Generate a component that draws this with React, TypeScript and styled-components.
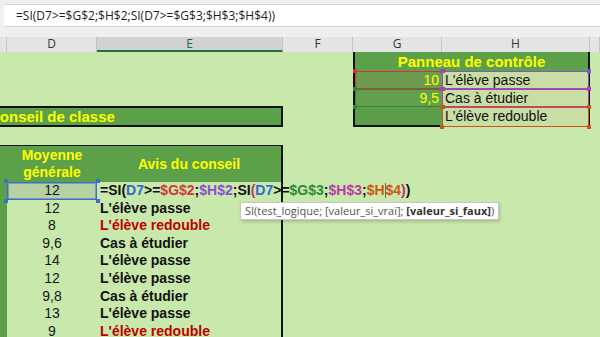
import React from 'react';
import styled, { createGlobalStyle } from 'styled-components';

const GREEN = '#5ca04a';
const LIGHT = '#c9e8ab';
const YELLOW = '#ffff00';

const GlobalStyle = createGlobalStyle`
  html, body { margin: 0; padding: 0; }
  body {
    width: 600px; height: 337px; overflow: hidden;
    background: ${LIGHT};
    font-family: "Liberation Sans", Arial, sans-serif;
  }
`;

const Page = styled.div`
  width: 600px;
  height: 337px;
  overflow: hidden;
  display: flex;
  flex-direction: column;
  background: ${LIGHT};
`;

const FormulaBar = styled.div`
  flex: none;
  height: 37px;
  box-sizing: border-box;
  padding: 4px 0 0 4px;
  background: #efefef;
`;

const FormulaInput = styled.div`
  height: 23px;
  box-sizing: border-box;
  background: #ffffff;
  border-top: 1px solid #d4d4d4;
  border-bottom: 1px solid #d4d4d4;
  padding-left: 12px;
  font-family: "Open Sans", "Noto Sans", sans-serif;
  font-size: 12px;
  line-height: 21px;
  color: #1e1e1e;
  white-space: nowrap;
`;

const HeaderRow = styled.div`
  flex: none;
  height: 15px;
  display: flex;
  background: #e4e4e4;
`;

const ColHead = styled.div<{ $w: number; $active?: boolean }>`
  flex: none;
  width: ${p => p.$w}px;
  box-sizing: border-box;
  border-right: 1px solid #c4c4c4;
  border-bottom: ${p => (p.$active ? '2px solid #217346' : 'none')};
  background: ${p => (p.$active ? '#d2d2d2' : 'transparent')};
  color: ${p => (p.$active ? '#1d6b40' : '#333333')};
  font-family: "Open Sans", "Noto Sans", sans-serif;
  font-size: 12px;
  line-height: 14px;
  text-align: center;
`;

const Sheet = styled.div`
  flex: 1;
  display: flex;
  min-height: 0;
`;

const LeftBlock = styled.div`
  flex: none;
  width: 283px;
  display: flex;
  flex-direction: column;
`;

const Spacer = styled.div<{ $h?: number; $w?: number }>`
  flex: none;
  height: ${p => (p.$h != null ? `${p.$h}px` : 'auto')};
  width: ${p => (p.$w != null ? `${p.$w}px` : 'auto')};
`;

const TitleBand = styled.div`
  flex: none;
  height: 21px;
  box-sizing: border-box;
  background: ${GREEN};
  border: 2px solid #121212;
  border-left: none;
  display: flex;
  align-items: center;
  overflow: hidden;
`;

const TitleText = styled.span`
  margin-left: -11px;
  color: ${YELLOW};
  font-weight: bold;
  font-size: 15px;
  white-space: nowrap;
`;

const TableHead = styled.div`
  flex: none;
  height: 37px;
  box-sizing: border-box;
  display: flex;
  background: ${GREEN};
  border-top: 1px solid #1a1a1a;
  border-right: 2px solid #121212;
`;

const HeadCell = styled.div<{ $w: number }>`
  flex: none;
  width: ${p => p.$w}px;
  display: flex;
  align-items: center;
  justify-content: center;
  text-align: center;
  color: ${YELLOW};
  font-weight: bold;
  font-size: 14px;
  line-height: 17px;
`;

const DataBlock = styled.div`
  flex: none;
  display: flex;
  flex-direction: column;
  border-right: 2px solid #121212;
`;

const DataRow = styled.div`
  flex: none;
  height: 17.6px;
  display: flex;
`;

const CStrip = styled.div`
  flex: none;
  width: 7px;
  background: ${GREEN};
`;

const NumCell = styled.div<{ $sel?: boolean }>`
  flex: none;
  position: relative;
  width: 90px;
  box-sizing: border-box;
  background: ${p => (p.$sel ? '#b6d2a3' : 'transparent')};
  box-shadow: ${p => (p.$sel ? 'inset 0 0 0 1.5px #3b6fc8' : 'none')};
  text-align: center;
  font-size: 14px;
  line-height: 17.6px;
  color: #151515;
`;

const TextCell = styled.div<{ $red?: boolean }>`
  flex: none;
  position: relative;
  width: 184px;
  padding-left: 3px;
  box-sizing: border-box;
  white-space: nowrap;
  font-weight: bold;
  font-size: 14px;
  line-height: 17.6px;
  color: ${p => (p.$red ? '#c00000' : '#111111')};
  z-index: 2;
`;

const Tok = styled.span<{ $c?: string }>`
  color: ${p => p.$c || '#111111'};
`;

const Caret = styled.span`
  display: inline-block;
  width: 1px;
  height: 15px;
  background: #6a6a6a;
  vertical-align: -3px;
`;

const Tooltip = styled.div`
  position: absolute;
  left: 143px;
  top: 20px;
  height: 18px;
  box-sizing: border-box;
  padding: 0 4px;
  background: #ffffff;
  border: 1px solid #c6c6c6;
  box-shadow: 1px 2px 3px rgba(0, 0, 0, 0.18);
  font-family: "Open Sans", "Noto Sans", sans-serif;
  font-weight: normal;
  font-size: 11px;
  line-height: 16px;
  color: #555555;
  white-space: nowrap;
  z-index: 5;
`;

const TipBold = styled.span`
  font-weight: bold;
  color: #333333;
`;

const Panel = styled.div`
  flex: none;
  width: 237px;
  display: flex;
  flex-direction: column;
  align-self: flex-start;
`;

const PanelTitle = styled.div`
  flex: none;
  height: 19px;
  box-sizing: border-box;
  background: ${GREEN};
  border-left: 2px solid #121212;
  border-right: 2px solid #121212;
  color: ${YELLOW};
  font-weight: bold;
  font-size: 15px;
  line-height: 19px;
  text-align: center;
`;

const PanelRow = styled.div<{ $last?: boolean }>`
  flex: none;
  display: flex;
  height: ${p => (p.$last ? 20 : 18)}px;
`;

const GCell = styled.div<{ $bg: string; $last?: boolean }>`
  flex: none;
  position: relative;
  width: 89px;
  box-sizing: border-box;
  background: ${p => p.$bg};
  border-left: 2px solid #121212;
  border-bottom: ${p => (p.$last ? '2px solid #121212' : 'none')};
  padding-right: 3px;
  text-align: right;
  color: ${YELLOW};
  font-size: 14px;
  line-height: 18px;
`;

const HCell = styled.div`
  flex: none;
  position: relative;
  width: 148px;
  box-sizing: border-box;
  background: #c9dea5;
  border-right: 2px solid #121212;
  padding-left: 3px;
  color: #111111;
  font-size: 14px;
  line-height: 18px;
  white-space: nowrap;
`;

const RangeBox = styled.div<{ $c: string }>`
  position: absolute;
  inset: 0 -1px 0 0;
  border: 1.5px solid ${p => p.$c};
  pointer-events: none;
`;

const Handle = styled.span<{ $c: string; $x: 'l' | 'r'; $y: 't' | 'b' }>`
  position: absolute;
  width: 4px;
  height: 4px;
  background: ${p => p.$c};
  ${p => (p.$x === 'l' ? 'left: -3px;' : 'right: -3px;')}
  ${p => (p.$y === 't' ? 'top: -3px;' : 'bottom: -3px;')}
  z-index: 3;
`;

const Handles: React.FC<{ c: string }> = ({ c }) => (
  <>
    <Handle $c={c} $x="l" $y="t" />
    <Handle $c={c} $x="r" $y="t" />
    <Handle $c={c} $x="l" $y="b" />
    <Handle $c={c} $x="r" $y="b" />
  </>
);

const Range: React.FC<{ c: string }> = ({ c }) => (
  <RangeBox $c={c}>
    <Handles c={c} />
  </RangeBox>
);

const C = {
  blue: '#2f6ccc',
  red: '#d3343a',
  purple: '#8b52c8',
  paren: '#c0307a',
  green: '#2a8a3a',
  magenta: '#b83ca8',
  orange: '#cc5616',
};

const FORMULA = '=SI(D7>=$G$2;$H$2;SI(D7>=$G$3;$H$3;$H$4))';

const EditFormula = () => (
  <>
    <Tok>=SI(</Tok>
    <Tok $c={C.blue}>D7</Tok>
    <Tok>&gt;=</Tok>
    <Tok $c={C.red}>$G$2</Tok>
    <Tok>;</Tok>
    <Tok $c={C.purple}>$H$2</Tok>
    <Tok>;SI</Tok>
    <Tok $c={C.paren}>(</Tok>
    <Tok $c={C.blue}>D7</Tok>
    <Tok>&gt;=</Tok>
    <Tok $c={C.green}>$G$3</Tok>
    <Tok>;</Tok>
    <Tok $c={C.magenta}>$H$3</Tok>
    <Tok>;</Tok>
    <Tok $c={C.orange}>$H</Tok>
    <Caret />
    <Tok $c={C.orange}>$4</Tok>
    <Tok $c={C.paren}>)</Tok>
    <Tok>)</Tok>
  </>
);

type Row = { n: string; t?: string; red?: boolean; edit?: boolean };

const ROWS: Row[] = [
  { n: '12', edit: true },
  { n: '12', t: "L'élève passe" },
  { n: '8', t: "L'élève redouble", red: true },
  { n: '9,6', t: 'Cas à étudier' },
  { n: '14', t: "L'élève passe" },
  { n: '12', t: "L'élève passe" },
  { n: '9,8', t: 'Cas à étudier' },
  { n: '13', t: "L'élève passe" },
  { n: '9', t: "L'élève redouble", red: true },
];

const COLS: { w: number; l: string; active?: boolean }[] = [
  { w: 7, l: '' },
  { w: 90, l: 'D' },
  { w: 186, l: 'E', active: true },
  { w: 70, l: 'F' },
  { w: 89, l: 'G' },
  { w: 148, l: 'H' },
  { w: 10, l: '' },
];

export default function App() {
  return (
    <Page>
      <GlobalStyle />
      <FormulaBar>
        <FormulaInput>{FORMULA}</FormulaInput>
      </FormulaBar>
      <HeaderRow>
        {COLS.map((c, i) => (
          <ColHead key={i} $w={c.w} $active={c.active}>
            {c.l}
          </ColHead>
        ))}
      </HeaderRow>
      <Sheet>
        <LeftBlock>
          <Spacer $h={54} />
          <TitleBand>
            <TitleText>Conseil de classe</TitleText>
          </TitleBand>
          <Spacer $h={18} />
          <TableHead>
            <HeadCell $w={7} />
            <HeadCell $w={90}>
              Moyenne
              <br />
              générale
            </HeadCell>
            <HeadCell $w={184}>Avis du conseil</HeadCell>
          </TableHead>
          <DataBlock>
            {ROWS.map((r, i) => (
              <DataRow key={i}>
                <CStrip />
                <NumCell $sel={r.edit}>
                  {r.n}
                  {r.edit && <Handles c="#3b6fc8" />}
                </NumCell>
                <TextCell $red={r.red}>
                  {r.edit ? (
                    <>
                      <EditFormula />
                      <Tooltip>
                        SI(test_logique; [valeur_si_vrai]; <TipBold>[valeur_si_faux]</TipBold>)
                      </Tooltip>
                    </>
                  ) : (
                    r.t
                  )}
                </TextCell>
              </DataRow>
            ))}
          </DataBlock>
        </LeftBlock>
        <Spacer $w={70} />
        <Panel>
          <PanelTitle>Panneau de contrôle</PanelTitle>
          <PanelRow>
            <GCell $bg="#6c9b4f">
              10
              <Range c={C.red} />
            </GCell>
            <HCell>
              L'élève passe
              <Range c={C.purple} />
            </HCell>
          </PanelRow>
          <PanelRow>
            <GCell $bg="#60a04c">
              9,5
              <Range c={C.green} />
            </GCell>
            <HCell>
              Cas à étudier
              <Range c={C.magenta} />
            </HCell>
          </PanelRow>
          <PanelRow $last>
            <GCell $bg="#5c9d4a" $last />
            <HCell>
              L'élève redouble
              <Range c={C.orange} />
            </HCell>
          </PanelRow>
        </Panel>
        <Spacer $w={10} />
      </Sheet>
    </Page>
  );
}
